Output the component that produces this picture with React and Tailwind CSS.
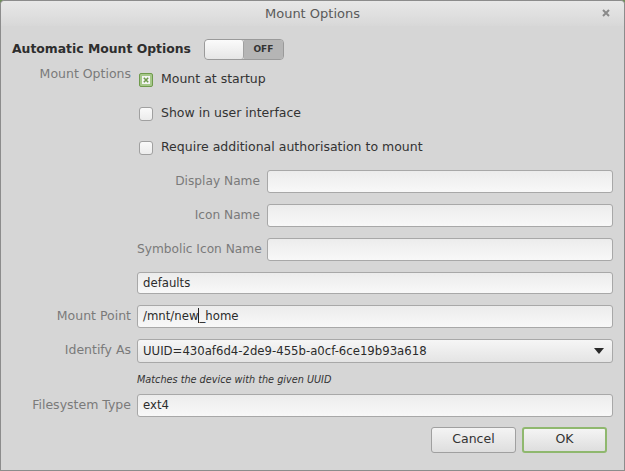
import React from 'react';

const font = { fontFamily: '"DejaVu Sans", "Liberation Sans", sans-serif' };

const Entry = ({ value, cursor }) => (
  <div
    className="flex h-[23px] flex-1 items-center rounded-[3px] border border-[#a8a8a8] bg-gradient-to-b from-[#ececec] to-[#f8f8f8] px-[5px] text-[13px] text-[#2b2b2b]"
    style={{ fontFamily: '"DejaVu Sans Condensed", "DejaVu Sans", sans-serif' }}
  >
    {cursor ? (
      <span>
        /mnt/new<span className="border-l border-[#222]">_</span>home
      </span>
    ) : (
      value
    )}
  </div>
);

const Check = ({ checked, label }) => (
  <div className="flex h-[23px] items-center pl-[2px]">
    {checked ? (
      <span className="flex h-[14px] w-[14px] items-center justify-center rounded-[2px] border border-[#6f9a4c] bg-[#a6c88a]">
        <svg width="8" height="8" viewBox="0 0 8 8">
          <rect x="0" y="0" width="8" height="8" fill="#f4f4f4" />
          <path d="M1.8 1.8 L6.2 6.2 M6.2 1.8 L1.8 6.2" stroke="#6f9a4c" strokeWidth="1.6" />
        </svg>
      </span>
    ) : (
      <span className="h-[14px] w-[14px] rounded-[3px] border border-[#a0a0a0] bg-gradient-to-b from-[#fafafa] to-[#ececec]" />
    )}
    <span className="ml-[8px] text-[12.5px] text-[#333]">{label}</span>
  </div>
);

const Label = ({ children, className = 'text-[12.5px]' }) => (
  <div className={`whitespace-nowrap text-right text-[#7a7a7a] ${className}`}>{children}</div>
);

export default function App() {
  return (
    <div className="h-[471px] w-[625px] bg-[#6f8f5a]" style={font}>
      <div className="flex h-full flex-col rounded-t-[4px] border border-[#8c8c8c] bg-[#d6d6d6]">
        <div className="relative flex h-[25px] items-center justify-center rounded-t-[4px] bg-gradient-to-b from-[#e8e8e8] to-[#d8d8d8]">
          <span className="text-[13px] text-[#5a5a5a]">Mount Options</span>
          <svg className="absolute right-[14px] top-[8px]" width="8" height="8" viewBox="0 0 8 8">
            <path d="M1 1 L7 7 M7 1 L1 7" stroke="#8a8a8a" strokeWidth="2" />
          </svg>
        </div>

        <div className="flex flex-1 flex-col pl-[11px] pr-[11px] pt-[13px]">
          <div className="flex h-[21px] items-center">
            <span className="text-[12.4px] font-bold text-[#2e2e2e]">Automatic Mount Options</span>
            <div className="ml-[13px] flex h-[21px] w-[80px] overflow-hidden rounded-[4px] border border-[#9a9a9a]">
              <div className="w-[39px] rounded-[3px] border-r border-[#a0a0a0] bg-gradient-to-b from-[#fbfbfb] to-[#e6e6e6]" />
              <div className="flex flex-1 items-center justify-center bg-[#b5b5b5] text-[9px] font-bold text-[#333]">OFF</div>
            </div>
          </div>

          <div className="mt-[8px] grid grid-cols-[119px_1fr] gap-x-[6px]">
            <Label className="-mt-[1px] text-[12.5px] leading-[14px]">Mount Options</Label>
            <div className="flex flex-col gap-[11px]">
              <Check checked label="Mount at startup" />
              <Check label="Show in user interface" />
              <Check label="Require additional authorisation to mount" />
              <div className="grid grid-cols-[123px_1fr] items-center gap-x-[7px] gap-y-[11px]">
                <Label className="text-[12.2px]">Display Name</Label>
                <Entry value="" />
                <Label className="text-[12.2px]">Icon Name</Label>
                <Entry value="" />
                <Label className="text-[12.2px]">Symbolic Icon Name</Label>
                <Entry value="" />
              </div>
              <Entry value="defaults" />
            </div>
          </div>

          <div className="mt-[11px] grid grid-cols-[119px_1fr] items-center gap-x-[6px]">
            <Label>Mount Point</Label>
            <Entry cursor />
          </div>

          <div className="mt-[11px] grid grid-cols-[119px_1fr] items-center gap-x-[6px]">
            <Label>Identify As</Label>
            <div
              className="flex h-[24px] items-center justify-between rounded-[3px] border border-[#a8a8a8] bg-gradient-to-b from-[#f6f6f6] to-[#e4e4e4] pl-[5px] pr-[8px] text-[13px] text-[#2b2b2b]"
              style={{ fontFamily: '"DejaVu Sans Condensed", "DejaVu Sans", sans-serif' }}
            >
              <span>UUID=430af6d4-2de9-455b-a0cf-6ce19b93a618</span>
              <svg width="10" height="6" viewBox="0 0 10 6">
                <path d="M0 0 L10 0 L5 6 Z" fill="#2a2a2a" />
              </svg>
            </div>
          </div>

          <div className="mt-[10px] grid h-[12px] grid-cols-[119px_1fr] items-center gap-x-[6px]">
            <div />
            <span className="whitespace-nowrap text-[9.7px] italic text-[#333]">Matches the device with the given UUID</span>
          </div>

          <div className="mt-[9px] grid grid-cols-[119px_1fr] items-center gap-x-[6px]">
            <Label>Filesystem Type</Label>
            <Entry value="ext4" />
          </div>

          <div className="mt-[10px] flex justify-end gap-[6px] pr-[6px]">
            <button className="h-[26px] w-[85px] rounded-[3px] border border-[#a0a0a0] bg-gradient-to-b from-[#f4f4f4] to-[#dedede] text-[12.5px] text-[#333]">
              Cancel
            </button>
            <button className="h-[26px] w-[85px] rounded-[3px] border-2 border-[#8fb86e] bg-gradient-to-b from-[#f4f4f4] to-[#dedede] text-[12.5px] text-[#333]">
              OK
            </button>
          </div>
        </div>
      </div>
    </div>
  );
}
